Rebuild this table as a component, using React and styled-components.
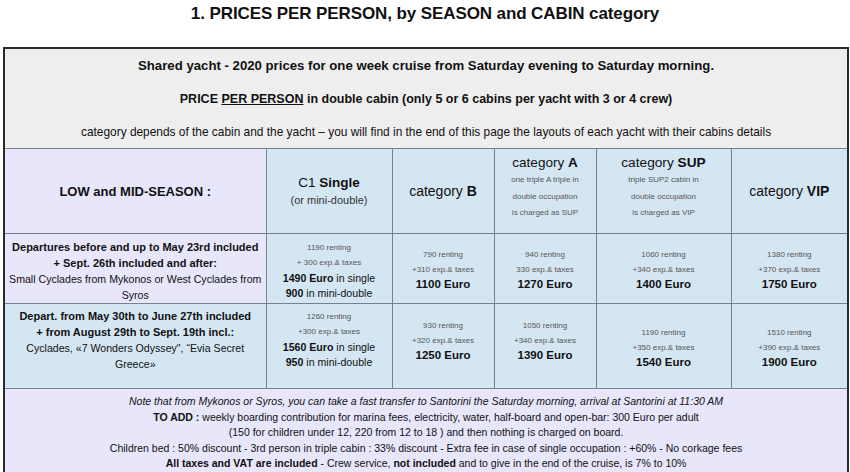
import React from 'react';
import styled, { createGlobalStyle } from 'styled-components';

const GlobalStyle = createGlobalStyle`
  html, body { margin: 0; padding: 0; background: #fff; }
  body { font-family: "Liberation Sans", Arial, Helvetica, sans-serif; color: #111; }
`;

const Page = styled.div`
  width: 850px;
  padding: 0 3px;
  box-sizing: border-box;
`;

const Title = styled.h1`
  margin: 0;
  height: 47px;
  padding-top: 4px;
  box-sizing: border-box;
  text-align: center;
  font-size: 17px;
  font-weight: bold;
  letter-spacing: -0.1px;
`;

const PriceTable = styled.table`
  width: 844px;
  table-layout: fixed;
  border-collapse: collapse;
  border: 2px solid #2a2a2a;
  border-bottom: none;
`;

const IntroCell = styled.td`
  background: #eeeeee;
  height: 33px;
  padding: 0;
  text-align: center;
  font-size: ${(p) => p.$size}px;
  font-weight: ${(p) => (p.$bold ? 'bold' : 'normal')};
  border: none;
  border-left: 2px solid #2a2a2a;
  border-right: 2px solid #2a2a2a;
`;

const Underline = styled.span`
  text-decoration: underline;
`;

const Cell = styled.td`
  background: ${(p) => (p.$tone === 'lav' ? '#e8e6fb' : '#d5e6f3')};
  border: 1px solid #76828e;
  padding: ${(p) => p.$top || 0}px 3px ${(p) => p.$bottom || 0}px;
  text-align: center;
  vertical-align: middle;
`;

const SeasonLabel = styled.div`
  font-size: 13px;
  font-weight: bold;
`;

const CatName = styled.div`
  font-size: ${(p) => p.$size || 14}px;
  line-height: 18px;
`;

const Note = styled.div`
  font-size: 8px;
  color: #555;
  line-height: ${(p) => p.$lh || 15}px;
`;

const Small = styled.div`
  font-size: 11px;
  color: #333;
  line-height: 16px;
`;

const RowTitle = styled.div`
  font-size: 10.6px;
  line-height: 16px;
  color: #111;
  b {
    font-size: 11px;
  }
`;

const Price = styled.div`
  font-size: ${(p) => p.$size || 11.5}px;
  line-height: 15px;
`;

const FooterCell = styled.td`
  background: #e8e6fb;
  border: 1px solid #76828e;
  border-left: 2px solid #2a2a2a;
  border-right: 2px solid #2a2a2a;
  padding: 5px 4px 0;
  text-align: center;
  font-size: 10.5px;
  line-height: 15.6px;
  vertical-align: top;
  height: 86px;
`;

const columns = [262, 126, 102, 102, 135, 117];

const rows = [
  {
    tone: 'lav',
    title: (
      <>
        <b>Departures before and up to May 23rd included + Sept. 26th included and after:</b>
        <br />
        Small Cyclades from Mykonos or West Cyclades from Syros
      </>
    ),
    single: ['1190 renting', '+ 300 exp.& taxes', '1490', '900'],
    prices: [
      ['790 renting', '+310 exp.& taxes', '1100 Euro'],
      ['940 renting', '330 exp.& taxes', '1270 Euro'],
      ['1060 renting', '+340 exp.& taxes', '1400 Euro'],
      ['1380 renting', '+370 exp.& taxes', '1750 Euro'],
    ],
    height: 70,
    shifts: [[4, 0], [4, 0], [2, 0], [2, 0], [2, 0], [2, 0]],
  },
  {
    tone: 'blue',
    title: (
      <>
        <b>
          Depart. from May 30th to June 27th included
          <br />+ from August 29th to Sept. 19th incl.:
        </b>
        <br />
        Cyclades, «7 Wonders Odyssey", “Evia Secret Greece»
      </>
    ),
    single: ['1260 renting', '+300 exp.& taxes', '1560', '950'],
    prices: [
      ['930 renting', '+320 exp.& taxes', '1250 Euro'],
      ['1050 renting', '+340 exp.& taxes', '1390 Euro'],
      ['1190 renting', '+350 exp.& taxes', '1540 Euro'],
      ['1510 renting', '+390 exp.& taxes', '1900 Euro'],
    ],
    height: 85,
    shifts: [[0, 13], [0, 13], [0, 12], [0, 12], [3, 0], [3, 0]],
  },
];

export default function App() {
  return (
    <Page>
      <GlobalStyle />
      <Title>1. PRICES PER PERSON, by SEASON and CABIN category</Title>
      <PriceTable>
        <colgroup>
          {columns.map((w, i) => (
            <col key={i} style={{ width: w }} />
          ))}
        </colgroup>
        <tbody>
          <tr>
            <IntroCell colSpan={6} $bold $size={13.2}>
              Shared yacht - 2020 prices for one week cruise from Saturday evening to Saturday morning.
            </IntroCell>
          </tr>
          <tr>
            <IntroCell colSpan={6} $bold $size={12.5}>
              PRICE <Underline>PER PERSON</Underline> in double cabin (only 5 or 6 cabins per yacht with 3 or 4 crew)
            </IntroCell>
          </tr>
          <tr>
            <IntroCell colSpan={6} $size={11.9}>
              category depends of the cabin and the yacht – you will find in the end of this page the layouts of each
              yacht with their cabins details
            </IntroCell>
          </tr>
          <tr style={{ height: 85 }}>
            <Cell $tone="lav">
              <SeasonLabel>LOW and MID-SEASON :</SeasonLabel>
            </Cell>
            <Cell>
              <CatName $size={13.5}>
                C1 <b>Single</b>
              </CatName>
              <Small>(or mini-double)</Small>
            </Cell>
            <Cell>
              <CatName>
                category <b>B</b>
              </CatName>
            </Cell>
            <Cell $bottom={6}>
              <CatName $size={13.5}>
                category <b>A</b>
              </CatName>
              <Note $lh={16.5}>one triple A triple in</Note>
              <Note $lh={16.5}>double occupation</Note>
              <Note $lh={16.5}>is charged as SUP</Note>
            </Cell>
            <Cell $bottom={6}>
              <CatName $size={13.7}>
                category <b>SUP</b>
              </CatName>
              <Note $lh={16.5}>triple SUP2 cabin in</Note>
              <Note $lh={16.5}>double occupation</Note>
              <Note $lh={16.5}>is charged as VIP</Note>
            </Cell>
            <Cell>
              <CatName>
                category <b>VIP</b>
              </CatName>
            </Cell>
          </tr>
          {rows.map((r, i) => (
            <tr key={i} style={{ height: r.height }}>
              <Cell $tone={r.tone} $top={r.shifts[0][0]} $bottom={r.shifts[0][1]}>
                <RowTitle>{r.title}</RowTitle>
              </Cell>
              <Cell $top={r.shifts[1][0]} $bottom={r.shifts[1][1]}>
                <Note>{r.single[0]}</Note>
                <Note $lh={16}>{r.single[1]}</Note>
                <Price $size={10.6}>
                  <b>{r.single[2]} Euro</b> in single
                </Price>
                <Price $size={10.6}>
                  <b>{r.single[3]}</b> in mini-double
                </Price>
              </Cell>
              {r.prices.map((p, j) => (
                <Cell key={j} $top={r.shifts[j + 2][0]} $bottom={r.shifts[j + 2][1]}>
                  <Note>{p[0]}</Note>
                  <Note>{p[1]}</Note>
                  <Price>
                    <b>{p[2]}</b>
                  </Price>
                </Cell>
              ))}
            </tr>
          ))}
          <tr>
            <FooterCell colSpan={6}>
              <i>
                Note that from Mykonos or Syros, you can take a fast transfer to Santorini the Saturday morning, arrival
                at Santorini at 11:30 AM
              </i>
              <br />
              <b>TO ADD :</b> weekly boarding contribution for marina fees, electricity, water, half-board and open-bar:
              300 Euro per adult
              <br />
              (150 for children under 12, 220 from 12 to 18 ) and then nothing is charged on board.
              <br />
              Children bed : 50% discount - 3rd person in triple cabin : 33% discount - Extra fee in case of single
              occupation : +60% - No corkage fees
              <br />
              <b>All taxes and VAT are included</b> - Crew service, <b>not included</b> and to give in the end of the
              cruise, is 7% to 10%
            </FooterCell>
          </tr>
        </tbody>
      </PriceTable>
    </Page>
  );
}
